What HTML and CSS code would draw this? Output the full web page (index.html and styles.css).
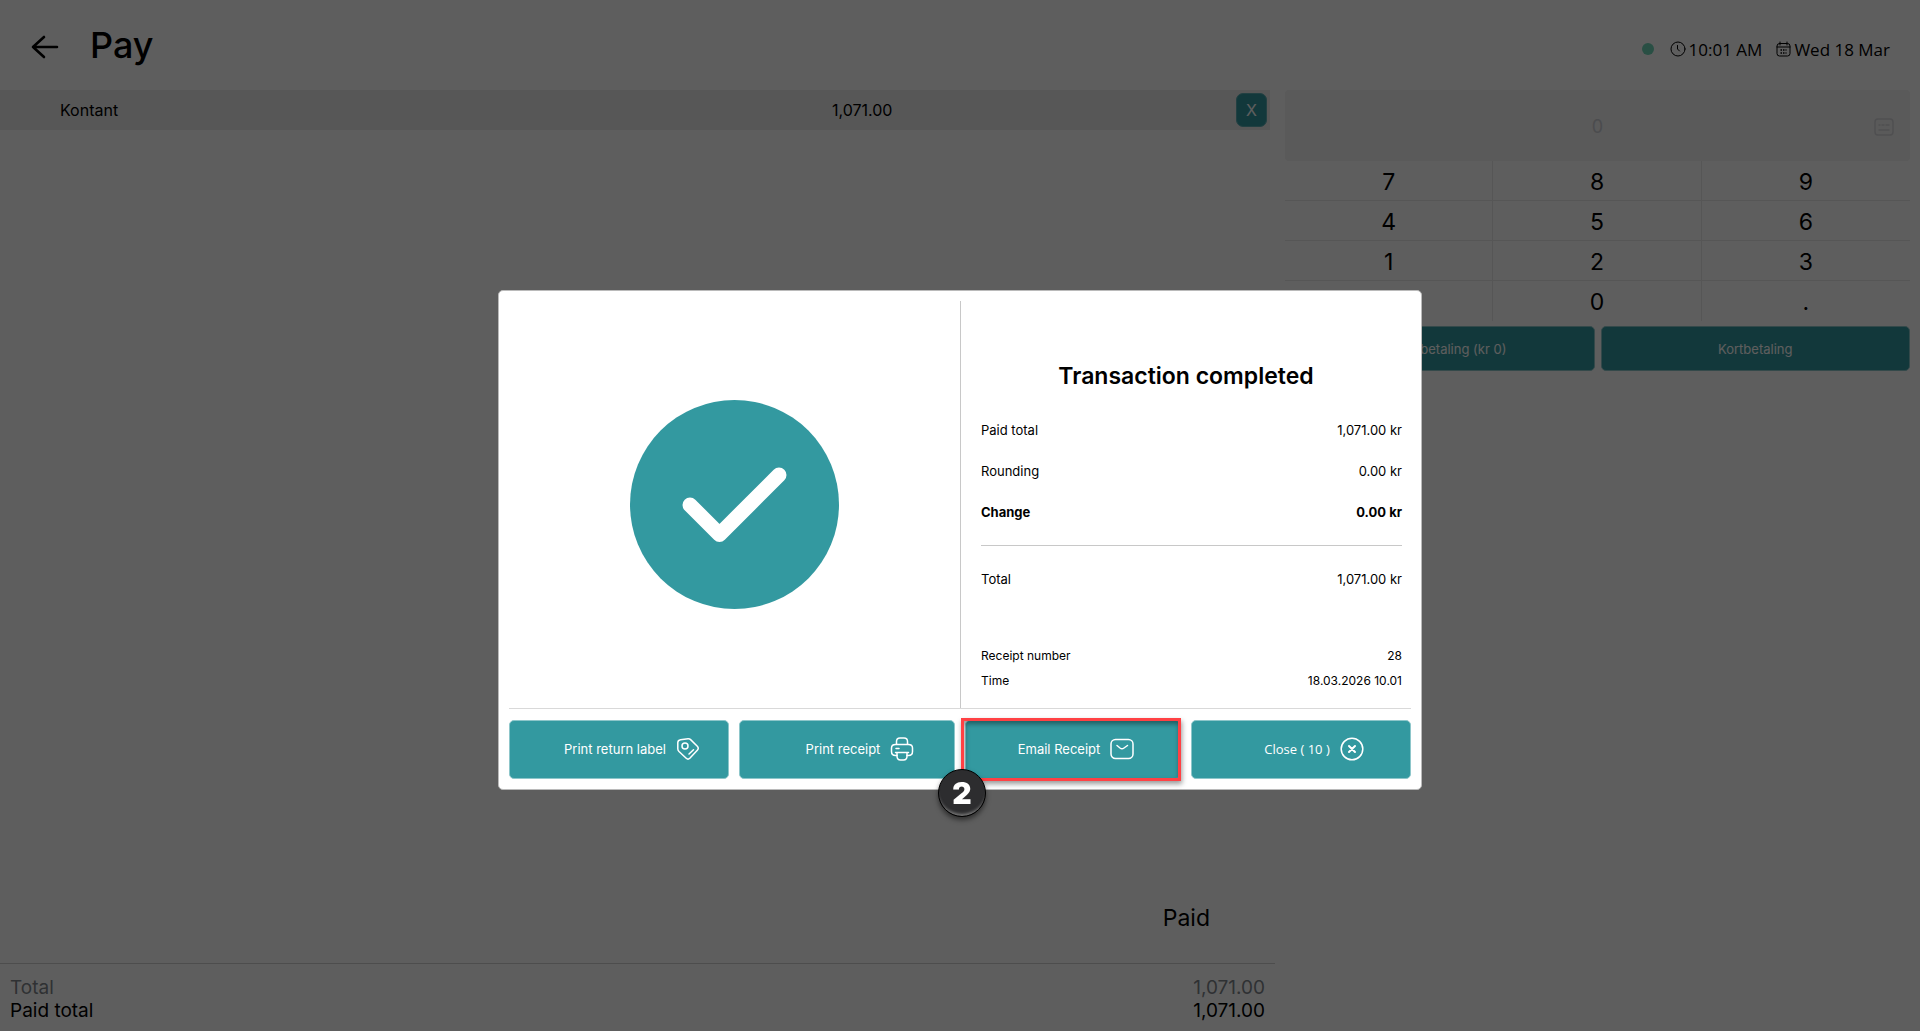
FILE: index.html
```html
<!DOCTYPE html>
<html lang="en">
<head>
  <meta charset="UTF-8" />
  <meta name="viewport" content="width=device-width, initial-scale=1.0" />
  <title>Pay</title>
  <link rel="stylesheet" href="styles.css">
</head>
<body>
  <header class="topbar">
    <button type="button" class="back-btn" aria-label="Back">
      <svg width="28" height="24" viewBox="0 0 28 24" fill="none" stroke="currentColor" stroke-width="2.6" stroke-linecap="round" stroke-linejoin="round">
        <path d="M13 2 L2 12 L13 22 M2 12 H26" />
      </svg>
    </button>
    <h1>Pay</h1>
    <div class="status">
      <span class="status-dot"></span>
      <span class="status-item">
        <svg width="16" height="16" viewBox="0 0 16 16" fill="none" stroke="currentColor" stroke-linecap="round">
          <circle cx="8" cy="8" r="7" />
          <path d="M7.5 4.5 V8 L9.5 10" />
        </svg>
        10:01 AM
      </span>
      <span class="status-item status-date">
        <svg width="15" height="16" viewBox="0 0 15 16" fill="none" stroke="currentColor" stroke-linecap="round">
          <rect x="1" y="2.5" width="13" height="12.5" rx="2.5" />
          <path d="M1 6 H14 M4 1 V4 M11 1 V4" />
          <path d="M4.5 9 H10.5 M4.5 12 H10.5" stroke-width="1.6" stroke-linecap="butt" stroke-dasharray="1.5 1" />
        </svg>
        Wed 18 Mar
      </span>
    </div>
  </header>

  <main class="pay">
    <section class="payments">
      <table class="payment-list">
        <tr>
          <td class="payment-name">Kontant</td>
          <td class="payment-amount">1,071.00</td>
          <td class="payment-remove"><button type="button" class="remove-btn">X</button></td>
        </tr>
      </table>

      <div class="paid-label">Paid</div>
      <dl class="totals">
        <div class="totals-row muted"><dt>Total</dt><dd>1,071.00</dd></div>
        <div class="totals-row"><dt>Paid total</dt><dd>1,071.00</dd></div>
      </dl>
    </section>

    <section class="register">
      <div class="amount-box">
        <input type="text" class="amount-input" placeholder="0" aria-label="Amount" />
        <svg class="keyboard-icon" width="20" height="18" viewBox="0 0 20 18" fill="none" stroke="currentColor" stroke-width="1.4" stroke-linecap="round">
          <rect x="1" y="1" width="18" height="16" rx="3" />
          <path d="M5 7 H6 M8 7 H10 M12 7 H15 M5 12 H15" />
        </svg>
      </div>
      <div class="keypad">
        <button type="button">7</button>
        <button type="button">8</button>
        <button type="button">9</button>
        <button type="button">4</button>
        <button type="button">5</button>
        <button type="button">6</button>
        <button type="button">1</button>
        <button type="button">2</button>
        <button type="button">3</button>
        <button type="button" aria-label="Clear"></button>
        <button type="button">0</button>
        <button type="button">.</button>
      </div>
      <div class="pay-methods">
        <button type="button" class="btn">Kontantbetaling (kr 0)</button>
        <button type="button" class="btn">Kortbetaling</button>
      </div>
    </section>
  </main>

  <div class="overlay">
    <div class="modal" role="dialog" aria-labelledby="modal-title">
      <div class="modal-body">
        <div class="success">
          <svg width="209" height="209" viewBox="0 0 209 209" fill="none">
            <circle cx="104.500" cy="104.500" r="104.500" fill="#3399a0" />
            <path d="M60 105 L89.500 134.500 L149 75" stroke="#fff" stroke-width="15" stroke-linecap="round" stroke-linejoin="round" />
          </svg>
        </div>
        <div class="summary">
          <h2 id="modal-title">Transaction completed</h2>
          <dl class="amounts">
            <div class="row"><dt>Paid total</dt><dd>1,071.00 kr</dd></div>
            <div class="row"><dt>Rounding</dt><dd>0.00 kr</dd></div>
            <div class="row change"><dt>Change</dt><dd>0.00 kr</dd></div>
            <div class="row total"><dt>Total</dt><dd>1,071.00 kr</dd></div>
          </dl>
          <dl class="receipt">
            <div class="row"><dt>Receipt number</dt><dd>28</dd></div>
            <div class="row"><dt>Time</dt><dd>18.03.2026 10.01</dd></div>
          </dl>
        </div>
      </div>

      <div class="modal-actions">
        <button type="button" class="btn action">
          Print return label
          <svg width="24" height="24" viewBox="0 0 24 24" fill="none" stroke="currentColor" stroke-width="1.5" stroke-linecap="round" stroke-linejoin="round">
            <path d="M4.500 2.800 L12 1.700 Q13.500 1.500 14.600 2.600 L21.300 9.300 Q23.200 11.300 21.300 13.300 L13.800 21.300 Q12 23 10.200 21.300 L3 14.500 Q1.800 13.300 1.800 11.800 V5.500 Q2 3.200 4.500 2.800 Z" />
            <circle cx="9" cy="9" r="3" />
            <path d="M13 17 L17.500 12.700" />
          </svg>
        </button>
        <button type="button" class="btn action">
          Print receipt
          <svg width="24" height="24" viewBox="0 0 24 24" fill="none" stroke="currentColor" stroke-width="1.5" stroke-linecap="round" stroke-linejoin="round">
            <path d="M6.500 7 V4.500 Q6.500 1 10 1 H14 Q17.500 1 17.500 4.500 V7" />
            <path d="M7 18.500 H5.500 Q1.500 18.500 1.500 14.500 V11 Q1.500 7.500 5.500 7.500 H18.500 Q22.500 7.500 22.500 11 V14.500 Q22.500 18.500 18.500 18.500 H17" />
            <path d="M5.500 15.500 H18.500 M7 15.500 V19 Q7 23 10.500 23 H13.500 Q17 23 17 19 V15.500 M6 11.500 H9" />
          </svg>
        </button>
        <div class="step">
          <button type="button" class="btn action email-btn">
            Email Receipt
            <svg width="24" height="24" viewBox="0 0 24 24" fill="none" stroke="currentColor" stroke-width="1.5" stroke-linecap="round" stroke-linejoin="round">
              <rect x="1" y="2.500" width="22" height="19" rx="4.500" />
              <path d="M7 8.500 L10 11 Q12 12.500 14 11 L17.500 8.500" />
            </svg>
          </button>
          <span class="step-number">2</span>
        </div>
        <button type="button" class="btn action close-btn">
          Close ( 10 )
          <svg width="24" height="24" viewBox="0 0 24 24" fill="none" stroke="currentColor" stroke-width="1.500" stroke-linecap="round">
            <circle cx="12" cy="12" r="10.800" />
            <path d="M9 9 L15 15 M15 9 L9 15" stroke-width="2" />
          </svg>
        </button>
      </div>
    </div>
  </div>
</body>
</html>
```
FILE: styles.css
```css
* {
  box-sizing: border-box;
}

body {
  font-family: Inter, Arial, sans-serif;
  background-color: #fff;
  color: #000;
  margin: 0;
  min-height: 100vh;
  display: flex;
  flex-direction: column;
}

button {
  font-family: inherit;
  color: inherit;
  background: none;
  border: none;
  padding: 0;
  cursor: pointer;
}

dl, dd {
  margin: 0;
}

/* Header */
.topbar {
  display: flex;
  align-items: center;
  height: 90px;
  padding: 0 30px 0 31px;
}

.back-btn {
  display: flex;
  padding-top: 4px;
}

h1 {
  margin: 0 0 0 31px;
  font-size: 36px;
  font-weight: 500;
}

.status {
  display: flex;
  align-items: center;
  margin-left: auto;
  padding-top: 8px;
  font-family: "Open Sans", sans-serif;
  font-size: 17px;
}

.status-dot {
  width: 12px;
  height: 12px;
  margin-right: 16px;
  border-radius: 50%;
  background-color: #6fd6b8;
}

.status-item {
  display: flex;
  align-items: center;
  gap: 3px;
}

.status-date {
  margin-left: 14px;
}

/* Page columns */
.pay {
  flex: 1;
  display: flex;
  gap: 10px;
  padding-right: 10px;
}

.payments {
  flex: 1;
  display: flex;
  flex-direction: column;
}

.payment-list {
  width: calc(100% - 5px);
  border-collapse: collapse;
  background-color: #ebebeb;
  font-size: 16px;
}

.payment-list td {
  height: 40px;
  padding: 0;
}

.payment-list .payment-name {
  width: 832px;
  padding-left: 60px;
}

.payment-list .payment-remove {
  padding-right: 3px;
  text-align: right;
}

.remove-btn {
  width: 31px;
  height: 34px;
  border: 1px solid #5cadb3;
  border-radius: 7px;
  background-color: #3399a0;
  color: #fff;
  font-size: 16px;
}

.paid-label {
  margin-top: auto;
  padding: 0 65px 30px 0;
  text-align: right;
  font-size: 23px;
  line-height: 30px;
}

.totals {
  padding: 12px 10px 9px;
  border-top: 1px solid #d2d2d2;
  font-size: 19px;
  line-height: 23px;
}

.totals-row {
  display: flex;
  justify-content: space-between;
}

.muted {
  color: #7f868c;
}

/* Keypad */
.register {
  width: 625px;
}

.amount-box {
  position: relative;
  height: 71px;
}

.amount-input {
  width: 100%;
  height: 100%;
  padding: 2px 0 0;
  border: none;
  border-radius: 4px;
  background-color: #f3f3f3;
  text-align: center;
  font-family: inherit;
  font-size: 18px;
}

.amount-input::placeholder {
  color: #cccdd4;
}

.keyboard-icon {
  position: absolute;
  top: 28px;
  right: 16px;
  color: #d6d6da;
}

.keypad {
  display: grid;
  grid-template-columns: repeat(3, 1fr);
}

.keypad button {
  height: 40px;
  padding-top: 2px;
  border-right: 1px solid #e9e9e9;
  border-bottom: 1px solid #e9e9e9;
  font-size: 23px;
}

.keypad button:nth-child(3n) {
  border-right: none;
}

.keypad button:nth-child(n + 10) {
  border-bottom: none;
}

.pay-methods {
  display: flex;
  gap: 6px;
  margin-top: 5px;
}

.btn {
  flex: 1;
  height: 45px;
  border: 1px solid #8dc6ca;
  border-radius: 5px;
  background-color: #3399a0;
  color: #fff;
  font-size: 13px;
}

/* Dialog */
.overlay {
  position: fixed;
  inset: 0;
  display: flex;
  align-items: center;
  justify-content: center;
  padding-top: 49px;
  background-color: rgba(0, 0, 0, 0.63);
}

.modal {
  width: 90%;
  max-width: 924px;
  padding: 10px;
  border: 1px solid #bababa;
  border-radius: 5px;
  background-color: #fff;
}

.modal-body {
  display: grid;
  grid-template-columns: 1fr 1fr;
  border-bottom: 1px solid #d9d9d9;
}

.success {
  display: flex;
  align-items: center;
  justify-content: center;
}

.summary {
  padding: 56px 0 15px;
  border-left: 1px solid #c8c8c8;
}

h2 {
  margin: 0 0 23px;
  text-align: center;
  font-size: 23px;
  font-weight: 600;
  line-height: 38px;
}

.amounts, .receipt {
  margin: 0 9px 0 20px;
}

.row {
  display: flex;
  justify-content: space-between;
  font-size: 13px;
  line-height: 25px;
}

.amounts .row {
  margin-bottom: 16px;
}

.change {
  font-weight: 700;
}

.amounts .total {
  padding-top: 21px;
  border-top: 1px solid #c8c8c8;
}

.amounts .change {
  margin-bottom: 20px;
}

.receipt {
  margin-top: 51px;
}

.receipt .row {
  font-size: 12px;
}

.modal-actions {
  display: grid;
  grid-template-columns: 55fr 54fr 54fr 55fr;
  gap: 10px;
  padding-top: 11px;
}

.action {
  display: flex;
  align-items: center;
  justify-content: center;
  gap: 10px;
  width: 100%;
  height: 59px;
  padding: 0 0 2px 26px;
}

.email-btn {
  padding-left: 6px;
}

.close-btn {
  font-family: "Open Sans", sans-serif;
}

/* Highlighted step */
.step {
  position: relative;
}

.step::after {
  content: "";
  position: absolute;
  inset: -2px 0 -2px -4px;
  border: 3px solid #ff4144;
  box-shadow: 1px 3px 5px rgba(0, 0, 0, 0.4), inset 1px 3px 5px rgba(0, 0, 0, 0.4);
  pointer-events: none;
}

.step-number {
  position: absolute;
  left: -27px;
  bottom: -38px;
  z-index: 1;
  width: 48px;
  height: 48px;
  border: 1px solid #000;
  border-radius: 50%;
  background-color: #2d2d2f;
  box-shadow: 0 3px 5px rgba(0, 0, 0, 0.5), inset 0 -4px 3px -2px #777;
  color: #fff;
  text-align: center;
  font-size: 30px;
  font-weight: 900;
  line-height: 46px;
}
```
